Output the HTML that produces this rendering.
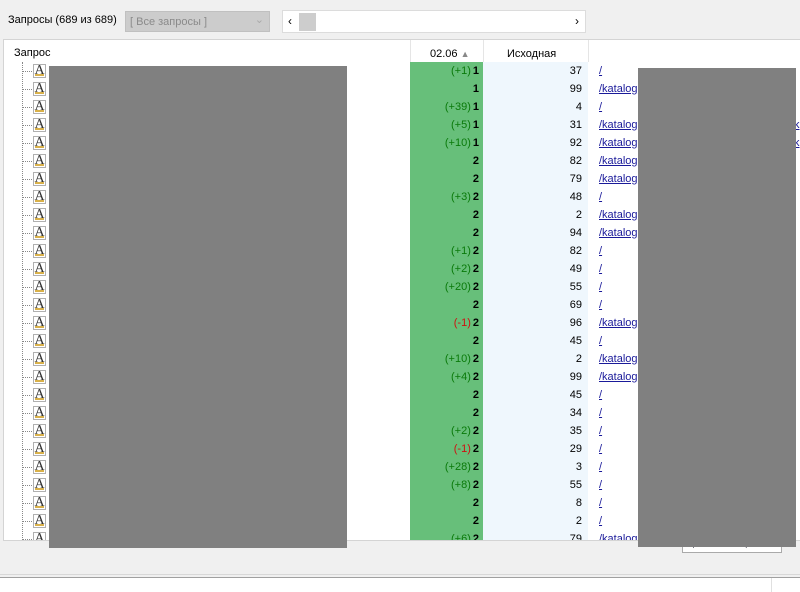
<!DOCTYPE html>
<html><head><meta charset="utf-8"><style>
*{margin:0;padding:0;box-sizing:border-box}
body{width:800px;height:592px;background:#f0f0f0;font-family:"Liberation Sans",sans-serif;font-size:11px;color:#000;position:relative;overflow:hidden}
.a{position:absolute}
.tbl{left:3px;top:39px;width:800px;height:502px;background:#fff;border:1px solid #d4d4d4;overflow:hidden}
.r{position:absolute;left:0;width:800px;height:18px;line-height:18px}
.g{position:absolute;left:406px;width:73px;height:18px;text-align:right;padding-right:4px;background:#67bf7a;font-weight:bold}
.g i{font-style:normal;font-weight:normal;color:#0a7a0a;margin-right:2px}
.g i.n{color:#d01010}
.o{position:absolute;left:479px;width:105px;height:18px;text-align:right;padding-right:6px;background:#eff7fd}
.l{position:absolute;left:595px;color:#1a1a9a;text-decoration:underline}
.ic{position:absolute;left:29px;top:2px;width:13px;height:14px;border:1px solid #b0b0b0;background:#fff;font:14px/12px "Liberation Serif",serif;text-align:center;color:#333}
.ic:after{content:"";position:absolute;left:1px;bottom:1px;width:9px;height:2px;background:#d9b14a}
.dh{position:absolute;left:18px;top:9px;width:10px;border-top:1px dotted #888}
.dv{position:absolute;left:18px;top:22px;height:500px;border-left:1px dotted #888}
</style></head><body>
<div class="a" style="left:8px;top:14px">Запросы (689 из 689)</div>
<div class="a" style="left:125px;top:11px;width:145px;height:21px;background:#cccccc;border:1px solid #c0c0c0;color:#8a8a8a;padding:4px 0 0 4px">[ Все запросы ]<span class="a" style="right:5px;top:1px;color:#aaa">&#8964;</span></div>
<div class="a" style="left:282px;top:10px;width:304px;height:23px;background:#fff;border:1px solid #dcdcdc"><span class="a" style="left:5px;top:3px;font-size:12px">&lsaquo;</span><div class="a" style="left:16px;top:2px;width:17px;height:18px;background:#cdcdcd"></div><span class="a" style="right:6px;top:3px;font-size:12px">&rsaquo;</span></div>
<div class="a tbl">
<div class="a" style="left:10px;top:7px">Запрос</div>
<div class="a" style="left:406px;top:0;width:1px;height:22px;background:#e5e5e5"></div>
<div class="a" style="left:426px;top:8px">02.06 <span style="color:#888;font-size:9px">&#9650;</span></div>
<div class="a" style="left:479px;top:0;width:1px;height:22px;background:#e5e5e5"></div>
<div class="a" style="left:503px;top:8px">Исходная</div>
<div class="a" style="left:584px;top:0;width:1px;height:22px;background:#e5e5e5"></div>
<div class="dv"></div>
<div class="r" style="top:22px"><div class="dh"></div><div class="ic">A</div><div class="g"><i>(+1)</i>1</div><div class="o">37</div><div class="l">/</div></div>
<div class="r" style="top:40px"><div class="dh"></div><div class="ic">A</div><div class="g">1</div><div class="o">99</div><div class="l">/katalog</div></div>
<div class="r" style="top:58px"><div class="dh"></div><div class="ic">A</div><div class="g"><i>(+39)</i>1</div><div class="o">4</div><div class="l">/</div></div>
<div class="r" style="top:76px"><div class="dh"></div><div class="ic">A</div><div class="g"><i>(+5)</i>1</div><div class="o">31</div><div class="l">/katalog</div><div class="l" style="left:790px">k</div></div>
<div class="r" style="top:94px"><div class="dh"></div><div class="ic">A</div><div class="g"><i>(+10)</i>1</div><div class="o">92</div><div class="l">/katalog</div><div class="l" style="left:790px">k</div></div>
<div class="r" style="top:112px"><div class="dh"></div><div class="ic">A</div><div class="g">2</div><div class="o">82</div><div class="l">/katalog</div></div>
<div class="r" style="top:130px"><div class="dh"></div><div class="ic">A</div><div class="g">2</div><div class="o">79</div><div class="l">/katalog</div></div>
<div class="r" style="top:148px"><div class="dh"></div><div class="ic">A</div><div class="g"><i>(+3)</i>2</div><div class="o">48</div><div class="l">/</div></div>
<div class="r" style="top:166px"><div class="dh"></div><div class="ic">A</div><div class="g">2</div><div class="o">2</div><div class="l">/katalog</div></div>
<div class="r" style="top:184px"><div class="dh"></div><div class="ic">A</div><div class="g">2</div><div class="o">94</div><div class="l">/katalog</div></div>
<div class="r" style="top:202px"><div class="dh"></div><div class="ic">A</div><div class="g"><i>(+1)</i>2</div><div class="o">82</div><div class="l">/</div></div>
<div class="r" style="top:220px"><div class="dh"></div><div class="ic">A</div><div class="g"><i>(+2)</i>2</div><div class="o">49</div><div class="l">/</div></div>
<div class="r" style="top:238px"><div class="dh"></div><div class="ic">A</div><div class="g"><i>(+20)</i>2</div><div class="o">55</div><div class="l">/</div></div>
<div class="r" style="top:256px"><div class="dh"></div><div class="ic">A</div><div class="g">2</div><div class="o">69</div><div class="l">/</div></div>
<div class="r" style="top:274px"><div class="dh"></div><div class="ic">A</div><div class="g"><i class="n">(-1)</i>2</div><div class="o">96</div><div class="l">/katalog</div></div>
<div class="r" style="top:292px"><div class="dh"></div><div class="ic">A</div><div class="g">2</div><div class="o">45</div><div class="l">/</div></div>
<div class="r" style="top:310px"><div class="dh"></div><div class="ic">A</div><div class="g"><i>(+10)</i>2</div><div class="o">2</div><div class="l">/katalog</div></div>
<div class="r" style="top:328px"><div class="dh"></div><div class="ic">A</div><div class="g"><i>(+4)</i>2</div><div class="o">99</div><div class="l">/katalog</div></div>
<div class="r" style="top:346px"><div class="dh"></div><div class="ic">A</div><div class="g">2</div><div class="o">45</div><div class="l">/</div></div>
<div class="r" style="top:364px"><div class="dh"></div><div class="ic">A</div><div class="g">2</div><div class="o">34</div><div class="l">/</div></div>
<div class="r" style="top:382px"><div class="dh"></div><div class="ic">A</div><div class="g"><i>(+2)</i>2</div><div class="o">35</div><div class="l">/</div></div>
<div class="r" style="top:400px"><div class="dh"></div><div class="ic">A</div><div class="g"><i class="n">(-1)</i>2</div><div class="o">29</div><div class="l">/</div></div>
<div class="r" style="top:418px"><div class="dh"></div><div class="ic">A</div><div class="g"><i>(+28)</i>2</div><div class="o">3</div><div class="l">/</div></div>
<div class="r" style="top:436px"><div class="dh"></div><div class="ic">A</div><div class="g"><i>(+8)</i>2</div><div class="o">55</div><div class="l">/</div></div>
<div class="r" style="top:454px"><div class="dh"></div><div class="ic">A</div><div class="g">2</div><div class="o">8</div><div class="l">/</div></div>
<div class="r" style="top:472px"><div class="dh"></div><div class="ic">A</div><div class="g">2</div><div class="o">2</div><div class="l">/</div></div>
<div class="r" style="top:490px"><div class="dh"></div><div class="ic">A</div><div class="g"><i>(+6)</i>2</div><div class="o">79</div><div class="l">/katalog</div></div>
</div>
<div class="a" style="left:49px;top:66px;width:298px;height:482px;background:#808080"></div>
<div class="a" style="left:682px;top:540px;width:100px;height:13px;background:#fff;border:1px solid #aaa;font-size:7px;color:#223;line-height:11px;padding-left:7px">&#9660; <span style="color:#aaa">··················</span> &#9660;</div>
<div class="a" style="left:638px;top:68px;width:158px;height:479px;background:#808080"></div>
<div class="a" style="left:0;top:574px;width:800px;height:1px;background:#d8d8d8"></div>
<div class="a" style="left:0;top:577px;width:800px;height:1px;background:#a0a0a0"></div>
<div class="a" style="left:0;top:578px;width:800px;height:14px;background:#fff"></div>
<div class="a" style="left:771px;top:578px;width:1px;height:14px;background:#e0e0e0"></div>
</body></html>
